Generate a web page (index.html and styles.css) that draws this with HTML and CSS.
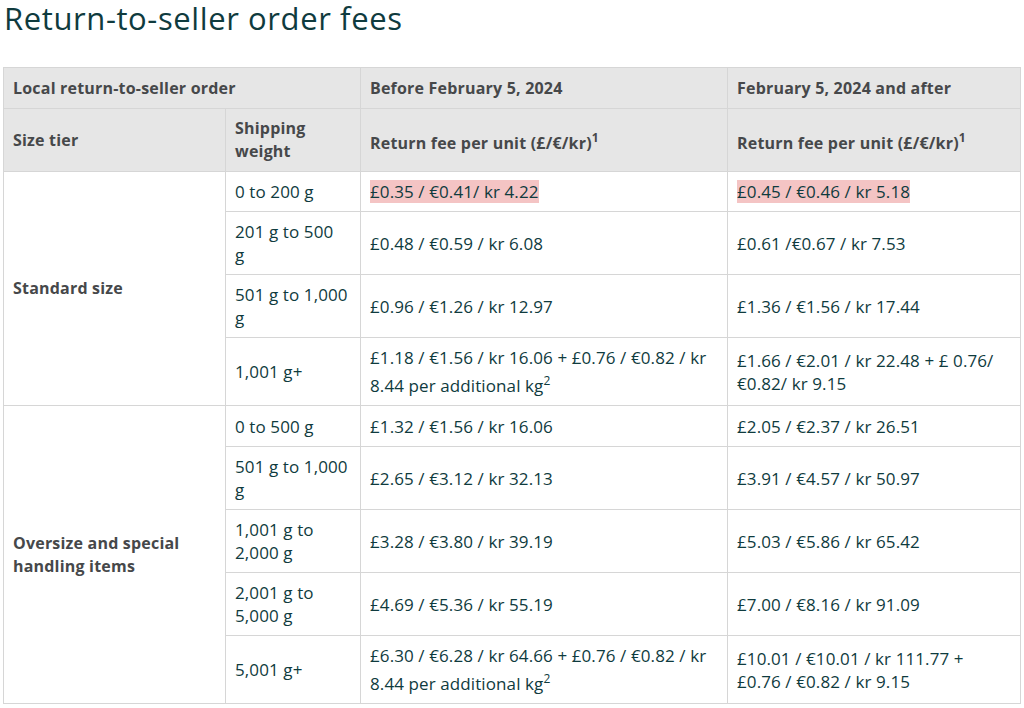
FILE: index.html
```html
<!DOCTYPE html>
<html lang="en">
<head>
<meta charset="utf-8">
<title>Return-to-seller order fees</title>
<link rel="stylesheet" href="styles.css">
</head>
<body>
<main class="page">
  <h1 class="title">Return-to-seller order fees</h1>
  <table class="fees">
    <colgroup>
      <col class="c-tier">
      <col class="c-weight">
      <col class="c-before">
      <col class="c-after">
    </colgroup>
    <thead>
      <tr class="h1row">
        <th colspan="2">Local return-to-seller order</th>
        <th>Before February 5, 2024</th>
        <th>February 5, 2024 and after</th>
      </tr>
      <tr class="h2row">
        <th>Size tier</th>
        <th>Shipping<br>weight</th>
        <th>Return fee per unit (£/€/kr)<sup>1</sup></th>
        <th>Return fee per unit (£/€/kr)<sup>1</sup></th>
      </tr>
    </thead>
    <tbody>
      <tr>
        <th rowspan="4" class="tier">Standard size</th>
        <td>0 to 200 g</td>
        <td><span class="hl">£0.35 / €0.41/ kr 4.22</span></td>
        <td><span class="hl">£0.45 / €0.46 / kr 5.18</span></td>
      </tr>
      <tr>
        <td>201 g to 500<br>g</td>
        <td>£0.48 / €0.59 / kr 6.08</td>
        <td>£0.61 /€0.67 / kr 7.53</td>
      </tr>
      <tr>
        <td>501 g to 1,000<br>g</td>
        <td>£0.96 / €1.26 / kr 12.97</td>
        <td>£1.36 / €1.56 / kr 17.44</td>
      </tr>
      <tr>
        <td>1,001 g+</td>
        <td>£1.18 / €1.56 / kr 16.06 + £0.76 / €0.82 / kr<br>8.44 per additional kg<sup>2</sup></td>
        <td>£1.66 / €2.01 / kr 22.48 + £ 0.76/<br>€0.82/ kr 9.15</td>
      </tr>
      <tr class="group-start">
        <th rowspan="5" class="tier">Oversize and special<br>handling items</th>
        <td>0 to 500 g</td>
        <td>£1.32 / €1.56 / kr 16.06</td>
        <td>£2.05 / €2.37 / kr 26.51</td>
      </tr>
      <tr>
        <td>501 g to 1,000<br>g</td>
        <td>£2.65 / €3.12 / kr 32.13</td>
        <td>£3.91 / €4.57 / kr 50.97</td>
      </tr>
      <tr>
        <td>1,001 g to<br>2,000 g</td>
        <td>£3.28 / €3.80 / kr 39.19</td>
        <td>£5.03 / €5.86 / kr 65.42</td>
      </tr>
      <tr>
        <td>2,001 g to<br>5,000 g</td>
        <td>£4.69 / €5.36 / kr 55.19</td>
        <td>£7.00 / €8.16 / kr 91.09</td>
      </tr>
      <tr>
        <td>5,001 g+</td>
        <td>£6.30 / €6.28 / kr 64.66 + £0.76 / €0.82 / kr<br>8.44 per additional kg<sup>2</sup></td>
        <td>£10.01 / €10.01 / kr 111.77 +<br>£0.76 / €0.82 / kr 9.15</td>
      </tr>
    </tbody>
  </table>
</main>
</body>
</html>
```

FILE: styles.css
```css
html, body {
  margin: 0;
  padding: 0;
  background: #ffffff;
}

body {
  font-family: "Open Sans", "Noto Sans", "Liberation Sans", sans-serif;
  color: #0f3b3e;
}

.page {
  padding: 0 4px 0 3px;
}

.title {
  margin: 0;
  padding: 0 0 0 1px;
  font-size: 31px;
  line-height: 37px;
  letter-spacing: 0.6px;
  font-weight: 400;
  color: #0f3b3e;
  height: 67px;
}

.fees {
  width: 1017px;
  border-collapse: collapse;
  table-layout: fixed;
  font-size: 17px;
  line-height: 23px;
  letter-spacing: 0.1px;
  border: 1px solid #d6d6d6;
}

.c-tier { width: 222px; }
.c-weight { width: 135px; }
.c-before { width: 367px; }
.c-after { width: 293px; }

.fees th,
.fees td {
  border: 1px solid #d6d6d6;
  padding: 8px 9px;
  text-align: left;
  vertical-align: middle;
}

.fees thead th {
  background: #e6e6e6;
}

.fees .h1row th {
  padding-top: 9px;
}

.fees thead th,
.fees tbody th.tier {
  font-size: 16px;
  letter-spacing: 0.2px;
  font-weight: 700;
  color: #46484a;
}

.fees .group-start td {
  padding-top: 9px;
}

.fees td {
  font-weight: 500;
  color: #0f3b3e;
}

.fees sup {
  font-size: 12px;
  line-height: 24px;
  vertical-align: 7px;
}

.hl {
  background: #f4c4c4;
}
```
